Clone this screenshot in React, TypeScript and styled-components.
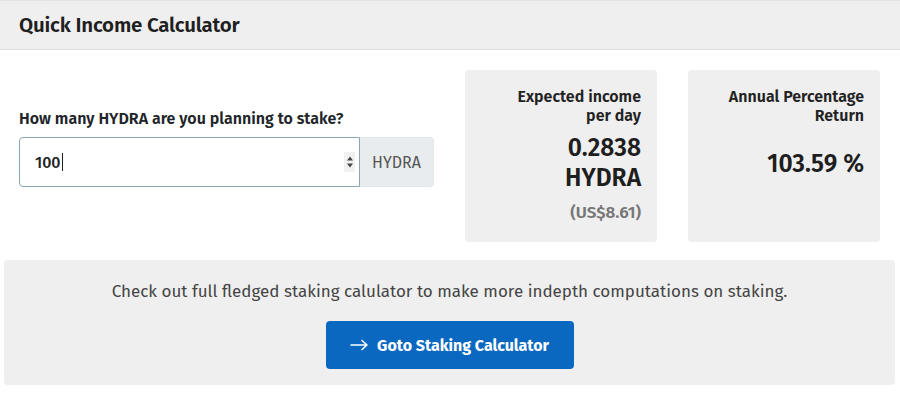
import React from "react";
import styled, { createGlobalStyle } from "styled-components";

const Global = createGlobalStyle`
  html, body { margin: 0; padding: 0; background: #fff; }
  body { font-family: "Fira Sans", "Noto Sans", "Open Sans", sans-serif; color: #212529; }
  * { box-sizing: border-box; }
`;

const Page = styled.div`
  width: 900px;
  height: 394px;
  background: #fff;
  overflow: hidden;
`;

const Header = styled.div`
  height: 50px;
  background: #efefef;
  border-top: 1px solid #e2e2e2;
  border-bottom: 1px solid #dedede;
  display: flex;
  align-items: center;
  padding-left: 19px;
`;

const Title = styled.h1`
  margin: 0;
  font-size: 20.5px;
  font-weight: 600;
  color: #1f1f1f;
  letter-spacing: -0.2px;
`;

const Body = styled.div`
  display: flex;
  padding: 20px 20px 0 19px;
  gap: 31px;
  height: 210px;
`;

const InputColumn = styled.div`
  width: 415px;
  display: flex;
  flex-direction: column;
  padding-top: 39px;
`;

const Label = styled.label`
  font-size: 16px;
  line-height: 19px;
  font-weight: 600;
  color: #212529;
  margin-bottom: 9px;
`;

const InputGroup = styled.div`
  display: flex;
  height: 50px;
`;

const NumberField = styled.div`
  flex: 1;
  display: flex;
  align-items: center;
  border: 1px solid #8aa7b5;
  border-radius: 4px 0 0 4px;
  background: #fff;
  padding: 0 4px 0 15px;
`;

const Value = styled.span`
  flex: 1;
  font-size: 16px;
  font-weight: 500;
  color: #222;
  display: flex;
  align-items: center;
`;

const Caret = styled.span`
  display: inline-block;
  width: 1px;
  height: 18px;
  background: #222;
  margin-left: 1px;
`;

const Spinner = styled.span`
  width: 11px;
  height: 20px;
  background: #f1f1f1;
  display: flex;
  align-items: center;
  justify-content: center;
`;

const Addon = styled.div`
  width: 74px;
  background: #e9ecef;
  border: 1px solid #e4e7ea;
  border-left: none;
  border-radius: 0 4px 4px 0;
  display: flex;
  align-items: center;
  justify-content: center;
  font-size: 16px;
  color: #555;
`;

const Card = styled.div`
  width: 192px;
  height: 172px;
  background: #efefef;
  border-radius: 4px;
  padding: 17px 16px 0 16px;
  text-align: right;
  display: flex;
  flex-direction: column;
  align-items: flex-end;
`;

const CardTitle = styled.div`
  font-size: 16px;
  font-weight: 600;
  line-height: 19px;
  color: #222;
`;

const BigValue = styled.div<{ $top: number }>`
  font-size: 24.5px;
  font-weight: 600;
  line-height: 30px;
  color: #1e1e1e;
  margin-top: ${(p) => p.$top}px;
`;

const SubValue = styled.div`
  font-size: 17px;
  font-weight: 600;
  color: #777;
  margin-top: 9px;
`;

const Footer = styled.div`
  margin: 0 5px 0 4px;
  height: 125px;
  background: #efefef;
  border-radius: 4px;
  display: flex;
  flex-direction: column;
  align-items: center;
  padding-top: 22px;
`;

const FooterText = styled.p`
  margin: 0;
  font-size: 17px;
  line-height: 20px;
  color: #444;
`;

const Button = styled.button`
  margin-top: 19px;
  width: 248px;
  height: 48px;
  border: none;
  border-radius: 4px;
  background: #0b68c1;
  color: #fff;
  font-family: inherit;
  font-size: 16px;
  font-weight: 700;
  display: flex;
  align-items: center;
  justify-content: center;
  gap: 8px;
`;

export default function App() {
  return (
    <Page>
      <Global />
      <Header>
        <Title>Quick Income Calculator</Title>
      </Header>
      <Body>
        <InputColumn>
          <Label>How many HYDRA are you planning to stake?</Label>
          <InputGroup>
            <NumberField>
              <Value>
                100
                <Caret />
              </Value>
              <Spinner>
                <svg width="8" height="16" viewBox="0 0 8 16">
                  <path d="M1 6.5 L4 2.5 L7 6.5 Z" fill="#444" />
                  <path d="M1 9.5 L4 13.5 L7 9.5 Z" fill="#444" />
                </svg>
              </Spinner>
            </NumberField>
            <Addon>HYDRA</Addon>
          </InputGroup>
        </InputColumn>
        <Card>
          <CardTitle>
            Expected income
            <br />
            per day
          </CardTitle>
          <BigValue $top={8}>
            0.2838
            <br />
            HYDRA
          </BigValue>
          <SubValue>(US$8.61)</SubValue>
        </Card>
        <Card>
          <CardTitle>
            Annual Percentage
            <br />
            Return
          </CardTitle>
          <BigValue $top={24}>103.59 %</BigValue>
        </Card>
      </Body>
      <Footer>
        <FooterText>
          Check out full fledged staking calulator to make more indepth computations on staking.
        </FooterText>
        <Button>
          <svg width="19" height="12" viewBox="0 0 19 12" fill="none">
            <path d="M1 6 H17 M12 1.5 L17 6 L12 10.5" stroke="#fff" strokeWidth="1.5" strokeLinecap="round" strokeLinejoin="round" />
          </svg>
          Goto Staking Calculator
        </Button>
      </Footer>
    </Page>
  );
}
